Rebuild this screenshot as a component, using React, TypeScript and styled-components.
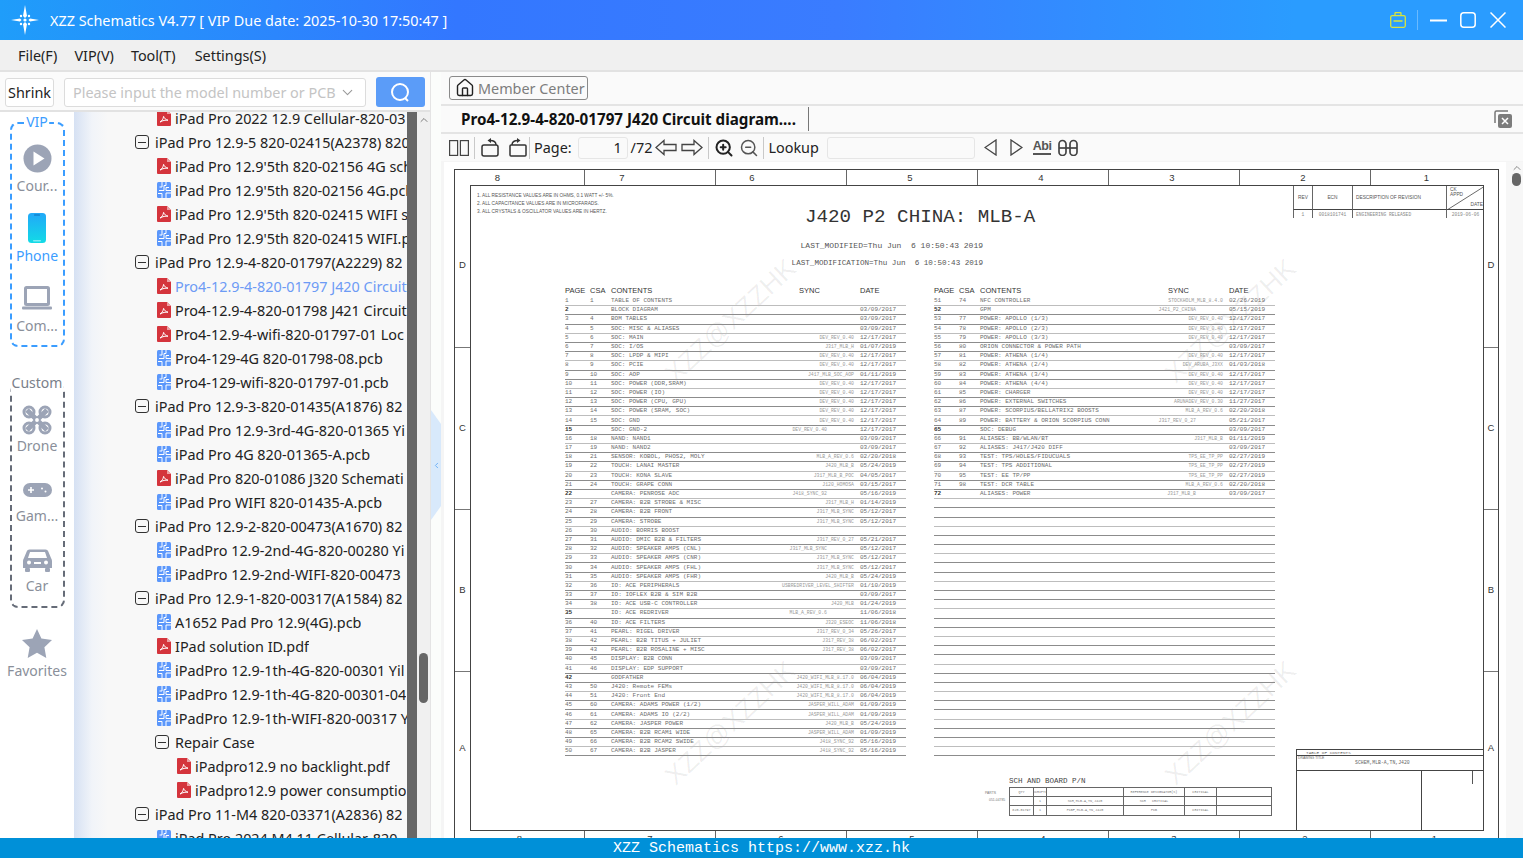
import styled, { createGlobalStyle } from "styled-components";
import { ZoomIn, ZoomOut, House, ChevronDown, ChevronUp, ChevronLeft } from "lucide-react";

const GlobalStyle = createGlobalStyle`
  html, body { margin: 0; padding: 0; height: 100%; overflow: hidden; }
  body { font-family: "Noto Sans", "Open Sans", "Liberation Sans", sans-serif; background: #fff; }
  * { box-sizing: border-box; }
`;

const Page = styled.div`
  width: 1523px;
  height: 858px;
  display: flex;
  flex-direction: column;
  overflow: hidden;
`;

const TitleBar = styled.div`
  height: 40px;
  flex: none;
  display: flex;
  align-items: center;
  padding-left: 11px;
  color: #fff;
  font-size: 14.4px;
  background: linear-gradient(90deg, #1f9dfa 0%, #3377ff 30%, #3a7cff 55%, #2a9cff 85%, #2a9cff 100%);
`;

const TitleText = styled.span`
  margin-left: 11px;
  white-space: pre;
`;

const WindowButtons = styled.div`
  margin-left: auto;
  display: flex;
  align-items: center;
  padding-right: 17px;
`;

const WinDivider = styled.div`
  width: 1px;
  height: 20px;
  background: rgba(255, 255, 255, 0.3);
  margin: 0 12px 0 11px;
`;

const WinIcon = styled.svg`
  display: block;
  margin-left: ${(p) => p.$gap || 0}px;
`;

const MenuBar = styled.div`
  height: 32px;
  flex: none;
  display: flex;
  align-items: center;
  gap: 17px;
  padding: 0 0 0 18px;
  font-size: 14.4px;
  color: #222;
  background: #f0f0f0;
  border-bottom: 2px solid #e2e2e2;
`;

const MenuItem = styled.span`
  margin-left: ${(p) => p.$ml || 0}px;
`;

const Body = styled.div`
  flex: 1;
  min-height: 0;
  display: flex;
`;

const LeftPane = styled.div`
  width: 431px;
  flex: none;
  display: flex;
  flex-direction: column;
  border-right: 1px solid #e4e4e4;
  background: #fbfbfb;
`;

const SearchRow = styled.div`
  height: 40px;
  flex: none;
  display: flex;
  align-items: center;
  padding: 2px 5px 0 5px;
  border-bottom: 2px solid #e2e2e2;
`;

const ShrinkButton = styled.div`
  width: 49px;
  height: 29px;
  border: 1px solid #dcdcdc;
  border-radius: 3px;
  background: #fff;
  display: flex;
  align-items: center;
  justify-content: center;
  font-size: 14.4px;
  color: #222;
`;

const SearchInput = styled.div`
  width: 302px;
  height: 29px;
  margin-left: 10px;
  border: 1px solid #dcdcdc;
  border-radius: 3px;
  background: #fff;
  display: flex;
  align-items: center;
  justify-content: space-between;
  padding: 0 9px 0 8px;
  font-size: 14.4px;
  color: #c4c4c4;
  white-space: nowrap;
`;

const SearchButton = styled.div`
  width: 49px;
  height: 30px;
  margin-left: 10px;
  border-radius: 3px;
  background: #5b9cf8;
  display: flex;
  align-items: center;
  justify-content: center;
`;

const LeftBody = styled.div`
  flex: 1;
  min-height: 0;
  display: flex;
`;

const Sidebar = styled.div`
  width: 74px;
  flex: none;
  background: #fff;
  display: flex;
  flex-direction: column;
  align-items: center;
  padding-top: 10px;
`;

const DashedGroup = styled.div`
  position: relative;
  width: 55px;
  height: ${(p) => p.$h}px;
  margin-top: ${(p) => p.$mt || 0}px;
  border: 2px dashed ${(p) => p.$color};
  border-radius: 8px;
  display: flex;
  flex-direction: column;
  align-items: center;
  padding-top: 19px;
`;

const GroupLabel = styled.span`
  position: absolute;
  top: ${(p) => p.$top}px;
  left: 50%;
  transform: translateX(-50%);
  font-size: 14px;
  line-height: 18px;
  padding: 0 1px;
  background: #fff;
  color: ${(p) => p.$color};
  white-space: nowrap;
`;

const SideItem = styled.div`
  height: 70px;
  width: ${(p) => p.$w || 51}px;
  flex: none;
  margin-top: ${(p) => p.$mt || 0}px;
  display: flex;
  flex-direction: column;
  align-items: center;
  font-size: 14px;
  color: ${(p) => (p.$active ? "#3b9dff" : "#8a8f9a")};
  white-space: nowrap;
`;

const SideIconBox = styled.div`
  height: 30px;
  flex: none;
  display: flex;
  align-items: center;
  justify-content: center;
`;

const SideLabel = styled.span`
  line-height: 20px;
  margin-top: ${(p) => p.$gap ?? 3}px;
`;

const Tree = styled.div`
  flex: 1;
  min-width: 0;
  overflow: hidden;
  background: linear-gradient(90deg, #d6e1f3 0px, #f1f4f9 18px, #f8f8f8 34px);
`;

const TreeInner = styled.div`
  margin-top: -6px;
`;

const TreeRow = styled.div`
  height: 24px;
  display: flex;
  align-items: center;
  padding-left: ${(p) => p.$indent}px;
  font-size: 14.4px;
  color: ${(p) => (p.$active ? "#6d9bf5" : "#222")};
  white-space: nowrap;
  overflow: hidden;
`;

const RowLabel = styled.span`
  margin-left: ${(p) => p.$gap}px;
  min-width: 0;
  overflow: hidden;
`;

const FileSvg = styled.svg`
  flex: none;
`;

const MinusBox = styled.span`
  width: 14px;
  height: 14px;
  flex: none;
  border: 1px solid #333;
  border-radius: 3px;
  display: flex;
  align-items: center;
  justify-content: center;
  &::before {
    content: "";
    width: 8px;
    height: 1px;
    background: #333;
  }
`;

const DarkTrack = styled.div`
  width: 10px;
  flex: none;
  background: #676767;
`;

const LightTrack = styled.div`
  width: 13px;
  flex: none;
  background: #f0f0f0;
  display: flex;
  flex-direction: column;
  align-items: center;
  padding-top: 2px;
`;

const LightThumb = styled.div`
  width: 9px;
  height: 50px;
  margin-top: 527px;
  border-radius: 5px;
  background: #666;
`;

const Splitter = styled.div`
  position: relative;
  width: 10px;
  flex: none;
  background: #fbfdfb;
`;

const SplitHandle = styled.div`
  position: absolute;
  top: 338px;
  left: 0;
  width: 10px;
  height: 110px;
  display: flex;
  align-items: center;
  justify-content: center;
  color: #6aaef5;
`;

const HandleShape = styled.svg`
  position: absolute;
  inset: 0;
`;

const HandleChevron = styled(ChevronLeft)`
  position: relative;
`;

const RightPane = styled.div`
  flex: 1;
  min-width: 0;
  display: flex;
  flex-direction: column;
  background: #fafafa;
`;

const MemberRow = styled.div`
  height: 34px;
  flex: none;
  display: flex;
  align-items: center;
  padding-left: 8px;
  border-bottom: 2px solid #e4e4e4;
`;

const MemberButton = styled.div`
  width: 139px;
  height: 24px;
  border: 1px solid #8a8a8a;
  border-radius: 3px;
  display: flex;
  align-items: center;
  gap: 3px;
  padding-left: 5px;
  font-size: 14.4px;
  color: #7d7d7d;
  white-space: nowrap;
`;

const TabRow = styled.div`
  height: 28px;
  flex: none;
  display: flex;
  align-items: center;
  padding-left: 20px;
  border-bottom: 2px solid #e4e4e4;
`;

const TabTitle = styled.span`
  font-size: 15.2px;
  font-weight: 700;
  color: #111;
  width: 347px;
  white-space: nowrap;
`;

const TabDivider = styled.div`
  width: 1px;
  height: 24px;
  background: #777;
`;

const CloseAll = styled.svg`
  margin-left: auto;
  margin-right: 11px;
`;

const ToolBar = styled.div`
  height: 27px;
  flex: none;
  display: flex;
  align-items: center;
  padding-left: 8px;
  font-size: 14.4px;
  color: #222;
`;

const ToolIcon = styled.svg`
  display: block;
  flex: none;
  margin-left: ${(p) => p.$ml || 0}px;
`;

const ToolSep = styled.div`
  width: 1px;
  height: 22px;
  flex: none;
  background: #c9c9c9;
  margin: 0 ${(p) => p.$r}px 0 ${(p) => p.$l}px;
`;

const ToolText = styled.span`
  margin-left: ${(p) => p.$ml || 0}px;
  white-space: nowrap;
`;

const PageBox = styled.div`
  width: 50px;
  height: 22px;
  margin-left: 6px;
  border: 1px solid #e6e6e6;
  border-radius: 3px;
  text-align: right;
  padding-right: 5px;
  line-height: 20px;
  background: #fafafa;
`;

const LookupBox = styled.div`
  width: 148px;
  height: 22px;
  margin-left: 8px;
  border: 1px solid #e6e6e6;
  border-radius: 3px;
  background: #fafafa;
`;

const AbiMark = styled.span`
  margin-left: 10px;
  font-size: 12.5px;
  font-weight: 700;
  line-height: 13px;
  color: #555;
  border-bottom: 2px solid #555;
  letter-spacing: -0.5px;
  font-family: "Liberation Sans", sans-serif;
`;

const ZoomWrap = styled.span`
  display: flex;
  flex: none;
  margin-left: ${(p) => p.$ml}px;
  color: ${(p) => p.$color};
`;

const Viewer = styled.div`
  flex: 1;
  min-height: 0;
  display: flex;
  padding: 1px 0 0 3px;
  background: #f5f5f5;
`;

const Sheet = styled.div`
  width: 1062px;
  flex: none;
  background: #fff;
  padding: 7px 7px 0 10px;
  overflow: hidden;
`;

const Frame = styled.div`
  height: 678px;
  border: 1px solid #444;
  display: flex;
  flex-direction: column;
  font-family: "Liberation Sans", sans-serif;
`;

const ZoneRow = styled.div`
  height: 15px;
  flex: none;
  display: grid;
  grid-template-columns: 129px repeat(6, 131px) 1fr;
`;

const ZoneCell = styled.div`
  text-align: center;
  font-size: 9.5px;
  line-height: 16px;
  color: #333;
  padding-right: ${(p) => p.$pull || 0}px;
  border-left: ${(p) => (p.$first ? 0 : "1px solid #666")};
`;

const FrameMiddle = styled.div`
  flex: 1;
  min-height: 0;
  display: flex;
`;

const Margin = styled.div`
  width: ${(p) => p.$w}px;
  flex: none;
  display: flex;
  flex-direction: column;
`;

const MarginCell = styled.div`
  height: ${(p) => p.$h}px;
  flex: none;
  display: flex;
  align-items: center;
  justify-content: center;
  padding-bottom: ${(p) => (p.$last ? 12 : 3)}px;
  font-size: 9.5px;
  color: #333;
  border-bottom: ${(p) => (p.$last ? 0 : "1px solid #777")};
`;

const Drawing = styled.div`
  position: relative;
  flex: 1;
  min-width: 0;
  border: 1px solid #444;
  overflow: hidden;
`;

const Note = styled.div`
  position: absolute;
  left: 6px;
  top: 6px;
  font-size: 4.75px;
  line-height: 8px;
  color: #555;
  white-space: pre;
`;

const MainHeading = styled.div`
  position: absolute;
  left: 334px;
  top: 20px;
  font-family: "Liberation Mono", monospace;
  font-size: 19.2px;
  line-height: 22px;
  color: #333;
  white-space: pre;
`;

const ModLine = styled.div`
  position: absolute;
  right: 500px;
  top: ${(p) => p.$top}px;
  font-family: "Liberation Mono", monospace;
  font-size: ${(p) => p.$size}px;
  line-height: 9px;
  color: #555;
  white-space: pre;
`;

const Watermark = styled.div`
  position: absolute;
  left: ${(p) => p.$x}px;
  top: ${(p) => p.$y}px;
  font-size: 27px;
  line-height: 30px;
  color: rgba(0, 0, 0, 0.065);
  transform: rotate(-43deg);
  white-space: nowrap;
  pointer-events: none;
`;

const TocTable = styled.div`
  position: absolute;
  left: ${(p) => p.$x}px;
  top: 100px;
  width: 341px;
`;

const TocHeader = styled.div`
  height: 11px;
  display: grid;
  grid-template-columns: 25px 21px 188px 61px 46px;
  font-size: 7.5px;
  line-height: 9px;
  color: #333;
`;

const TocLine = styled.div`
  height: 9.2px;
  display: grid;
  grid-template-columns: 25px 21px 130px 1fr 46px;
  align-items: center;
  border-bottom: 1px solid ${(p) => (p.$soft ? "#bdbdbd" : "#8c8c8c")};
  font-family: "Liberation Mono", monospace;
  font-size: 6px;
  line-height: 8px;
  color: #6e6e6e;
  white-space: pre;
`;

const TocPageNo = styled.span`
  color: ${(p) => (p.$strong ? "#333" : "#6e6e6e")};
  font-weight: ${(p) => (p.$strong ? 700 : 400)};
`;

const TocSync = styled.span`
  text-align: right;
  font-size: 4.8px;
  color: #9a9a9a;
  padding-right: ${(p) => (p.$shift ? 33 : 6)}px;
  overflow: hidden;
`;

const RevBlock = styled.div`
  position: absolute;
  left: 822px;
  top: 0;
  width: 191px;
  display: grid;
  grid-template-columns: 19px 40px 94px 1fr;
  grid-template-rows: 24px 8px;
  font-size: 4.8px;
  color: #555;
`;

const RevCell = styled.div`
  position: relative;
  border-left: 1px solid #666;
  border-bottom: ${(p) => (p.$head ? "1px solid #444" : 0)};
  display: flex;
  align-items: center;
  justify-content: ${(p) => (p.$left ? "flex-start" : "center")};
  padding-left: ${(p) => (p.$left ? 3 : 0)}px;
  white-space: nowrap;
  overflow: hidden;
`;

const RevMono = styled.span`
  font-family: "Liberation Mono", monospace;
  font-size: 4.6px;
  color: #888;
`;

const RevDiagonal = styled.svg`
  position: absolute;
  inset: 0;
`;

const CkText = styled.span`
  position: absolute;
  left: 3px;
  top: 2px;
  line-height: 4.5px;
`;

const DateText = styled.span`
  position: absolute;
  right: 1px;
  bottom: 2px;
`;

const TitleBlock = styled.div`
  position: absolute;
  left: 825px;
  top: 563px;
  width: 189px;
  height: 82px;
  border-left: 1px solid #444;
  border-top: 1px solid #444;
  display: flex;
  flex-direction: column;
  font-family: "Liberation Mono", monospace;
  color: #666;
`;

const TitleBlockRow = styled.div`
  position: relative;
  height: ${(p) => p.$h}px;
  flex: none;
  border-bottom: 1px solid #444;
  font-size: ${(p) => p.$size}px;
  line-height: ${(p) => p.$h - 1}px;
  padding-left: ${(p) => p.$pad}px;
  white-space: pre;
`;

const TinyLabel = styled.span`
  position: absolute;
  left: 1px;
  top: 0;
  font-size: 3.4px;
  line-height: 5px;
  font-family: "Liberation Sans", sans-serif;
`;

const TitleBlockBottom = styled.div`
  flex: 1;
  display: flex;
`;

const TitleBlockCell = styled.div`
  flex: none;
  width: 125px;
  border-right: 1px solid #444;
`;

const TitleBlockTick = styled.div`
  width: 1px;
  height: 13px;
  margin-left: 50px;
  background: #555;
`;

const BomHeading = styled.div`
  position: absolute;
  left: 538px;
  top: 591px;
  font-family: "Liberation Mono", monospace;
  font-size: 7.5px;
  line-height: 9px;
  color: #444;
  white-space: pre;
`;

const BomSide = styled.div`
  position: absolute;
  left: ${(p) => p.$x}px;
  top: ${(p) => p.$y}px;
  font-size: 3.4px;
  line-height: 5px;
  color: #777;
  white-space: pre;
`;

const BomTable = styled.div`
  position: absolute;
  left: 538px;
  top: 601px;
  width: 263px;
  border-top: 1px solid #666;
  border-left: 1px solid #666;
  display: grid;
  grid-template-columns: 24px 13px 77px 61px 32px 1fr;
  grid-auto-rows: 9.2px;
  font-family: "Liberation Mono", monospace;
  font-size: 3.4px;
  color: #777;
`;

const BomCell = styled.div`
  border-right: 1px solid #666;
  border-bottom: 1px solid #666;
  display: flex;
  align-items: center;
  justify-content: center;
  white-space: pre;
  overflow: hidden;
`;

const PageScroll = styled.div`
  flex: 1;
  display: flex;
  flex-direction: column;
  align-items: center;
  padding-left: 4px;
  background: #f7f7f7;
  color: #666;
`;

const PageThumb = styled.div`
  width: 9px;
  height: 13px;
  border-radius: 5px;
  background: #666;
  margin-top: -1px;
`;

const PageScrollEnd = styled.div`
  margin-top: auto;
  height: 9px;
  overflow: hidden;
`;

const StatusBar = styled.div`
  height: 20px;
  flex: none;
  padding-top: 1px;
  background: #0090d8;
  color: #fff;
  font-family: "Liberation Mono", monospace;
  font-size: 15px;
  line-height: 20px;
  text-align: center;
  white-space: pre;
  overflow: hidden;
`;

const PdfIcon = () => (
  <FileSvg width="14" height="16" viewBox="0 0 14 16">
    <path d="M1 0h9l4 4v11a1 1 0 0 1-1 1H1a1 1 0 0 1-1-1V1a1 1 0 0 1 1-1z" fill="#d4343c" />
    <path d="M10 0l4 4h-4z" fill="#eda0a4" />
    <path d="M3 12c2-1 3.2-3 3.6-5.6.8 2 2 3.2 4.4 3.8-2.6-.2-5.2.2-8 1.8z" fill="none" stroke="#fff" strokeWidth="1" />
  </FileSvg>
);

const PcbIcon = () => (
  <FileSvg width="14" height="16" viewBox="0 0 14 16">
    <rect width="14" height="16" rx="1.5" fill="#5b97fb" />
    <path d="M5 0v5H2.5M9 0v3.5H7v5H2M12 5.5H9v3h5M5 16v-4.5H1M9 16v-5h5" fill="none" stroke="#fff" strokeWidth="1" />
  </FileSvg>
);

const Logo = () => (
  <svg width="28" height="30" viewBox="0 0 28 30">
    <path d="M14 0l2 11-2 2-2-2zM14 30l-2-11 2-2 2 2zM0 15l9-1.6 1.6 1.6L9 16.6zM28 15l-9 1.6-1.6-1.6 1.6-1.6z" fill="#fff" />
    <circle cx="10" cy="11" r="1.2" fill="#fff" />
    <circle cx="18" cy="11" r="1.2" fill="#fff" />
    <circle cx="10" cy="19" r="1.2" fill="#fff" />
    <circle cx="18" cy="19" r="1.2" fill="#fff" />
    <circle cx="14" cy="15" r="1.6" fill="#fff" />
  </svg>
);

const GREY = "#9ca4b6";

const PlayIcon = () => (
  <svg width="29" height="29" viewBox="0 0 29 29">
    <circle cx="14.5" cy="14.5" r="14" fill={GREY} />
    <path d="M10.5 7.5l11 7-11 7z" fill="#fff" />
  </svg>
);

const PhoneIcon = () => (
  <svg width="18" height="30" viewBox="0 0 18 30">
    <defs>
      <linearGradient id="ph" x1="0" y1="0" x2="0" y2="1">
        <stop offset="0" stopColor="#21a8f8" />
        <stop offset="1" stopColor="#12dbe6" />
      </linearGradient>
    </defs>
    <rect width="18" height="30" rx="3.5" fill="url(#ph)" />
    <rect x="6" y="1.6" width="6" height="1" rx=".5" fill="#0b6fb8" />
    <rect x="5" y="27.4" width="8" height=".8" rx=".4" fill="#e8ffff" />
  </svg>
);

const LaptopIcon = () => (
  <svg width="30" height="24" viewBox="0 0 30 24">
    <rect x="3.5" y="1.5" width="23" height="17" rx="1" fill="none" stroke={GREY} strokeWidth="3" />
    <rect x="0" y="20.5" width="30" height="3" rx="1" fill={GREY} />
  </svg>
);

const DroneIcon = () => (
  <svg width="30" height="30" viewBox="0 0 30 30">
    <g fill="none" stroke={GREY}>
      <circle cx="7" cy="7" r="5" strokeWidth="3" />
      <circle cx="23" cy="7" r="5" strokeWidth="3" />
      <circle cx="7" cy="23" r="5" strokeWidth="3" />
      <circle cx="23" cy="23" r="5" strokeWidth="3" />
      <path d="M5 5l20 20M25 5L5 25" strokeWidth="5" />
    </g>
    <circle cx="15" cy="15" r="2.6" fill="#fff" stroke={GREY} strokeWidth="1.4" />
  </svg>
);

const GameIcon = () => (
  <svg width="29" height="14" viewBox="0 0 29 14">
    <rect width="29" height="14" rx="7" fill={GREY} />
    <path d="M8 4v6M5 7h6" stroke="#fff" strokeWidth="1.6" />
    <circle cx="19" cy="5.5" r="1" fill="#fff" />
    <circle cx="22.5" cy="8.5" r="1" fill="#fff" />
  </svg>
);

const CarIcon = () => (
  <svg width="29" height="24" viewBox="0 0 29 24">
    <path d="M6.5 1.5h16c1.4 0 2.3.8 2.8 2L28 10c.6 1 1 1.8 1 3v7H0v-7c0-1.200.4-2 1-3l2.700-6.500c.5-1.200 1.400-2 2.800-2z" fill={GREY} />
    <path d="M7 4h15l2 6H5z" fill="#fff" />
    <circle cx="6" cy="14.500" r="2" fill="#fff" />
    <circle cx="23" cy="14.500" r="2" fill="#fff" />
    <rect x="11" y="14" width="7" height="2" fill="#fff" />
    <rect x="2" y="20" width="5" height="4" rx="1" fill={GREY} />
    <rect x="22" y="20" width="5" height="4" rx="1" fill={GREY} />
  </svg>
);

const StarIcon = () => (
  <svg width="30" height="29" viewBox="0 0 30 29">
    <path d="M15 0l4.400 9.500L30 11l-7.600 7.200L24.300 29 15 23.800 5.700 29l1.900-10.800L0 11l10.600-1.500z" fill={GREY} />
  </svg>
);

type FileKind = "group" | "pdf" | "pcb" | "sub";
type TreeEntry = { kind: FileKind; text: string; indent?: number; active?: boolean };

// names are only as long as the panel shows them, the panel cuts the rest
const treeEntries: TreeEntry[] = [
  { kind: "pdf", text: "iPad Pro 2022 12.9 Cellular-820-03" },
  { kind: "group", text: "iPad Pro 12.9-5 820-02415(A2378) 820" },
  { kind: "pdf", text: "iPad Pro 12.9'5th 820-02156 4G sch" },
  { kind: "pcb", text: "iPad Pro 12.9'5th 820-02156 4G.pcb" },
  { kind: "pdf", text: "iPad Pro 12.9'5th 820-02415 WIFI s" },
  { kind: "pcb", text: "iPad Pro 12.9'5th 820-02415 WIFI.pcb" },
  { kind: "group", text: "iPad Pro 12.9-4-820-01797(A2229) 82" },
  { kind: "pdf", text: "Pro4-12.9-4-820-01797 J420 Circuit", active: true },
  { kind: "pdf", text: "Pro4-12.9-4-820-01798 J421 Circuit" },
  { kind: "pdf", text: "Pro4-12.9-4-wifi-820-01797-01 Loc" },
  { kind: "pcb", text: "Pro4-129-4G 820-01798-08.pcb" },
  { kind: "pcb", text: "Pro4-129-wifi-820-01797-01.pcb" },
  { kind: "group", text: "iPad Pro 12.9-3-820-01435(A1876) 82" },
  { kind: "pcb", text: "iPad Pro 12.9-3rd-4G-820-01365 Yi" },
  { kind: "pcb", text: "iPad Pro 4G 820-01365-A.pcb" },
  { kind: "pdf", text: "iPad Pro 820-01086 J320 Schemati" },
  { kind: "pcb", text: "iPad Pro WIFI 820-01435-A.pcb" },
  { kind: "group", text: "iPad Pro 12.9-2-820-00473(A1670) 82" },
  { kind: "pcb", text: "iPadPro 12.9-2nd-4G-820-00280 Yi" },
  { kind: "pcb", text: "iPadPro 12.9-2nd-WIFI-820-00473" },
  { kind: "group", text: "iPad Pro 12.9-1-820-00317(A1584) 82" },
  { kind: "pcb", text: "A1652 Pad Pro 12.9(4G).pcb" },
  { kind: "pdf", text: "IPad solution ID.pdf" },
  { kind: "pcb", text: "iPadPro 12.9-1th-4G-820-00301 Yil" },
  { kind: "pcb", text: "iPadPro 12.9-1th-4G-820-00301-04" },
  { kind: "pcb", text: "iPadPro 12.9-1th-WIFI-820-00317 Y" },
  { kind: "sub", text: "Repair Case" },
  { kind: "pdf", text: "iPadpro12.9 no backlight.pdf", indent: 103 },
  { kind: "pdf", text: "iPadpro12.9 power consumptio", indent: 103 },
  { kind: "group", text: "iPad Pro 11-M4 820-03371(A2836) 82" },
  { kind: "pcb", text: "iPad Pro 2024 M4 11 Cellular-820-" },
];

const rowIndent = (e: TreeEntry) => {
  if (e.indent) return e.indent;
  if (e.kind === "group") return 61;
  if (e.kind === "sub") return 81;
  return 83;
};

// page|csa|contents|sync|date, a trailing ^ on sync means it sits further left
const leftToc = `1|1|TABLE OF CONTENTS||
2||BLOCK DIAGRAM||03/09/2017
3|4|BOM TABLES||03/09/2017
4|5|SOC: MISC & ALIASES||03/09/2017
5|6|SOC: MAIN|DEV_REV_0.40|12/17/2017
6|7|SOC: I/OS|J317_MLB_H|01/07/2019
7|8|SOC: LPDP & MIPI|DEV_REV_0.40|12/17/2017
8|9|SOC: PCIE|DEV_REV_0.40|12/17/2017
9|10|SOC: AOP|J417_MLB_SOC_AOP|01/11/2019
10|11|SOC: POWER (DDR,SRAM)|DEV_REV_0.40|12/17/2017
11|12|SOC: POWER (IO)|DEV_REV_0.40|12/17/2017
12|13|SOC: POWER (CPU, GPU)|DEV_REV_0.40|12/17/2017
13|14|SOC: POWER (SRAM, SOC)|DEV_REV_0.40|12/17/2017
14|15|SOC: GND|DEV_REV_0.40|12/17/2017
15||SOC: GND-2|DEV_REV_0.40^|12/17/2017
16|18|NAND: NAND1||03/09/2017
17|19|NAND: NAND2||03/09/2017
18|21|SENSOR: KOBOL, PHOS2, MOLY|MLB_A_REV_0.6|02/20/2018
19|22|TOUCH: LANAI MASTER|J420_MLB_B|05/24/2019
20|23|TOUCH: KONA SLAVE|J317_MLB_B_POC|04/05/2017
21|24|TOUCH: GRAPE CONN|J120_HOMOSA|03/15/2017
22||CAMERA: PENROSE ADC|J418_SYNC_92^|05/16/2019
23|27|CAMERA: B2B STROBE & MISC|J317_MLB_H|01/14/2019
24|28|CAMERA: B2B FRONT|J317_MLB_SYNC|05/12/2017
25|29|CAMERA: STROBE|J317_MLB_SYNC|05/12/2017
26|30|AUDIO: BORRIS BOOST||
27|31|AUDIO: DMIC B2B & FILTERS|J317_REV_0_27|05/21/2017
28|32|AUDIO: SPEAKER AMPS (CNL)|J317_MLB_SYNC^|05/12/2017
29|33|AUDIO: SPEAKER AMPS (CNR)|J317_MLB_SYNC|05/12/2017
30|34|AUDIO: SPEAKER AMPS (FHL)|J317_MLB_SYNC|05/12/2017
31|35|AUDIO: SPEAKER AMPS (FHR)|J420_MLB_B|05/24/2019
32|36|IO: ACE PERIPHERALS|USBREDRIVER_LEVEL_SHIFTER|01/10/2019
33|37|IO: IOFLEX B2B & SIM B2B||03/09/2017
34|38|IO: ACE USB-C CONTROLLER|J420_MLB|01/24/2019
35||IO: ACE REDRIVER|MLB_A_REV_0.6^|11/06/2018
36|40|IO: ACE FILTERS|J320_ESEOC|11/06/2018
37|41|PEARL: RIGEL DRIVER|J317_REV_0_34|05/26/2017
38|42|PEARL: B2B TITUS + JULIET|J317_REV_38|06/02/2017
39|43|PEARL: B2B ROSALINE + MISC|J317_REV_38|06/02/2017
40|45|DISPLAY: B2B CONN||03/09/2017
41|46|DISPLAY: EDP SUPPORT||03/09/2017
42||GODFATHER|J420_WIFI_MLB_8.17.0|06/04/2019
43|50|J420: Remote FEMs|J420_WIFI_MLB_8.17.0|06/04/2019
44|51|J420: Front End|J420_WIFI_MLB_8.17.0|06/04/2019
45|60|CAMERA: ADAMS POWER (1/2)|JASPER_WILL_ADAM|01/09/2019
46|61|CAMERA: ADAMS IO (2/2)|JASPER_WILL_ADAM|01/09/2019
47|62|CAMERA: JASPER POWER|J420_MLB_B|05/24/2019
48|65|CAMERA: B2B RCAM1 WIDE|JASPER_WILL_ADAM|01/09/2019
49|66|CAMERA: B2B RCAM2 SWIDE|J418_SYNC_92|05/16/2019
50|67|CAMERA: B2B JASPER|J418_SYNC_92|05/16/2019`;

const rightToc = `51|74|NFC CONTROLLER|STOCKHOLM_MLB_8.4.0|02/26/2019
52||GPM|J421_P2_CHINA^|05/15/2019
53|77|POWER: APOLLO (1/3)|DEV_REV_0.40|12/17/2017
54|78|POWER: APOLLO (2/3)|DEV_REV_0.40|12/17/2017
55|79|POWER: APOLLO (3/3)|DEV_REV_0.40|12/17/2017
56|80|ORION CONNECTOR & POWER PATH||03/09/2017
57|81|POWER: ATHENA (1/4)|DEV_REV_0.40|12/17/2017
58|82|POWER: ATHENA (2/4)|DEV_ARUBA_J3XX|01/03/2018
59|83|POWER: ATHENA (3/4)|DEV_REV_0.40|12/17/2017
60|84|POWER: ATHENA (4/4)|DEV_REV_0.40|12/17/2017
61|85|POWER: CHARGER|DEV_REV_0.40|12/17/2017
62|86|POWER: EXTERNAL SWITCHES|ARUNADEV_REV_0.30|11/27/2017
63|87|POWER: SCORPIUS/BELLATRIX2 BOOSTS|MLB_A_REV_0.6|02/20/2018
64|89|POWER: BATTERY & ORION SCORPIUS CONN|J317_REV_0_27^|05/21/2017
65||SOC: DEBUG||03/09/2017
66|91|ALIASES: BB/WLAN/BT|J317_MLB_B|01/11/2019
67|92|ALIASES: J417/J420 DIFF||03/09/2017
68|93|TEST: TPS/HOLES/FIDUCUALS|TPS_EE_TP_PP|02/27/2019
69|94|TEST: TPS ADDITIONAL|TPS_EE_TP_PP|02/27/2019
70|95|TEST: EE TP/PP|TPS_EE_TP_PP|02/27/2019
71|98|TEST: DCR TABLE|MLB_A_REV_0.6|02/20/2018
72||ALIASES: POWER|J317_MLB_B^|03/09/2017`;

const strongPages = new Set(["2", "15", "22", "35", "42", "52", "65", "72"]);

const parseToc = (raw: string, fill: number) => {
  const rows = raw.split("\n").map((l) => l.split("|"));
  while (rows.length < fill) rows.push(["", "", "", "", ""]);
  return rows;
};

const TocBlock = ({ x, raw }: { x: number; raw: string }) => (
  <TocTable $x={x}>
    <TocHeader>
      <span>PAGE</span>
      <span>CSA</span>
      <span>CONTENTS</span>
      <span>SYNC</span>
      <span>DATE</span>
    </TocHeader>
    {parseToc(raw, 50).map((r, i) => {
      const shift = r[3].endsWith("^");
      return (
        <TocLine key={i} $soft={i % 3 === 0}>
          <TocPageNo $strong={strongPages.has(r[0])}>{r[0]}</TocPageNo>
          <span>{r[1]}</span>
          <span>{r[2]}</span>
          <TocSync $shift={shift}>{r[3].replace("^", "")}</TocSync>
          <span>{r[4]}</span>
        </TocLine>
      );
    })}
  </TocTable>
);

const zoneLabels = ["8", "7", "6", "5", "4", "3", "2", "1"];
const zoneLetters = ["D", "C", "B", "A"];
// the printed numbers do not sit in the middle of their cells on the top strip
const topPull = [44, 56, 58, 4, 4, 4, 4, 16];

const ZoneStrip = ({ pull }: { pull?: number[] }) => (
  <ZoneRow>
    {zoneLabels.map((z, i) => (
      <ZoneCell key={z} $first={i === 0} $pull={pull ? pull[i] : 0}>
        {z}
      </ZoneCell>
    ))}
  </ZoneRow>
);

const MarginStrip = ({ w }: { w: number }) => (
  <Margin $w={w}>
    {zoneLetters.map((l, i) => (
      <MarginCell key={l} $h={i === 0 ? 163 : 162} $last={i === 3}>
        {l}
      </MarginCell>
    ))}
  </Margin>
);

const bomCells = [
  "QTY", "DESCRIPTION", "", "REFERENCE DESIGNATOR(S)", "CRITICAL", "",
  "", "1", "SCH,MLB-A,TN,J420", "SCH   CRITICAL", "", "",
  "820-01797", "1", "PCBF,MLB-A,TN,J420", "PCB", "CRITICAL", "",
];

export default function App() {
  return (
    <Page>
      <GlobalStyle />
      <TitleBar>
        <Logo />
        <TitleText>XZZ Schematics V4.77 [ VIP Due date: 2025-10-30 17:50:47 ]</TitleText>
        <WindowButtons>
          <WinIcon width="16" height="16" viewBox="0 0 16 16" fill="none" stroke="#d9e43c" strokeWidth="1.300">
            <rect x="0.700" y="3.700" width="14.600" height="11.600" rx="1.500" />
            <path d="M5 3.500V1.500a1 1 0 0 1 1-1h4a1 1 0 0 1 1 1v2M3.500 9h9" />
          </WinIcon>
          <WinDivider />
          <WinIcon width="17" height="3" viewBox="0 0 17 3">
            <rect width="17" height="2" y="0.500" fill="#fff" />
          </WinIcon>
          <WinIcon $gap={13} width="16" height="16" viewBox="0 0 16 16" fill="none" stroke="#fff" strokeWidth="1.500">
            <rect x="0.800" y="0.800" width="14.400" height="14.400" rx="3" />
          </WinIcon>
          <WinIcon $gap={14} width="16" height="16" viewBox="0 0 16 16" fill="none" stroke="#fff" strokeWidth="1.500">
            <path d="M0.500 0.500l15 15M15.500 0.500l-15 15" />
          </WinIcon>
        </WindowButtons>
      </TitleBar>
      <MenuBar>
        <MenuItem>File(F)</MenuItem>
        <MenuItem>VIP(V)</MenuItem>
        <MenuItem>Tool(T)</MenuItem>
        <MenuItem $ml={2}>Settings(S)</MenuItem>
      </MenuBar>
      <Body>
        <LeftPane>
          <SearchRow>
            <ShrinkButton>Shrink</ShrinkButton>
            <SearchInput>
              Please input the model number or PCB
              <ChevronDown size={17} color="#9a9a9a" strokeWidth={1.5} />
            </SearchInput>
            <SearchButton>
              <svg width="19" height="19" viewBox="0 0 19 19" fill="none" stroke="#fff" strokeWidth="2">
                <circle cx="9" cy="9" r="8" />
                <path d="M14 15l3 3" />
              </svg>
            </SearchButton>
          </SearchRow>
          <LeftBody>
            <Sidebar>
              <DashedGroup $h={225} $color="#3b9dff">
                <GroupLabel $top={-11} $color="#3b9dff">VIP</GroupLabel>
                <SideItem>
                  <SideIconBox><PlayIcon /></SideIconBox>
                  <SideLabel>Cour...</SideLabel>
                </SideItem>
                <SideItem $active>
                  <SideIconBox><PhoneIcon /></SideIconBox>
                  <SideLabel>Phone</SideLabel>
                </SideItem>
                <SideItem>
                  <SideIconBox><LaptopIcon /></SideIconBox>
                  <SideLabel>Com...</SideLabel>
                </SideItem>
              </DashedGroup>
              <DashedGroup $h={224} $mt={37} $color="#666c78">
                <GroupLabel $top={-12} $color="#7a808a">Custom</GroupLabel>
                <SideItem>
                  <SideIconBox><DroneIcon /></SideIconBox>
                  <SideLabel $gap={1}>Drone</SideLabel>
                </SideItem>
                <SideItem>
                  <SideIconBox><GameIcon /></SideIconBox>
                  <SideLabel $gap={1}>Gam...</SideLabel>
                </SideItem>
                <SideItem>
                  <SideIconBox><CarIcon /></SideIconBox>
                  <SideLabel $gap={1}>Car</SideLabel>
                </SideItem>
              </DashedGroup>
              <SideItem $w={70} $mt={20}>
                <SideIconBox><StarIcon /></SideIconBox>
                <SideLabel>Favorites</SideLabel>
              </SideItem>
            </Sidebar>
            <Tree>
              <TreeInner>
                {treeEntries.map((e) => (
                  <TreeRow key={e.text} $indent={rowIndent(e)} $active={e.active}>
                    {e.kind === "pdf" && <PdfIcon />}
                    {e.kind === "pcb" && <PcbIcon />}
                    {(e.kind === "group" || e.kind === "sub") && <MinusBox />}
                    <RowLabel $gap={e.kind === "group" || e.kind === "sub" ? 6 : 4}>{e.text}</RowLabel>
                  </TreeRow>
                ))}
              </TreeInner>
            </Tree>
            <DarkTrack />
            <LightTrack>
              <ChevronUp size={12} color="#555" strokeWidth={1.5} />
              <LightThumb />
            </LightTrack>
          </LeftBody>
        </LeftPane>
        <Splitter>
          <SplitHandle>
            <HandleShape width="10" height="110" viewBox="0 0 10 110">
              <path d="M0 0l10 14v82L0 110z" fill="#d8e9fb" />
            </HandleShape>
            <HandleChevron size={9} strokeWidth={2.500} />
          </SplitHandle>
        </Splitter>
        <RightPane>
          <MemberRow>
            <MemberButton>
              <House size={20} color="#222" strokeWidth={1.700} />
              Member Center
            </MemberButton>
          </MemberRow>
          <TabRow>
            <TabTitle>Pro4-12.9-4-820-01797 J420 Circuit diagram....</TabTitle>
            <TabDivider />
            <CloseAll width="18" height="18" viewBox="0 0 18 18">
              <path d="M1 13V2.500A1.500 1.500 0 0 1 2.500 1H14" fill="none" stroke="#777" strokeWidth="1.500" />
              <rect x="4" y="4" width="14" height="14" rx="2" fill="#7c7c7c" />
              <path d="M8 8l6 6M14 8l-6 6" stroke="#fff" strokeWidth="1.500" />
            </CloseAll>
          </TabRow>
          <ToolBar>
            <ToolIcon width="20" height="16" viewBox="0 0 20 16" fill="none" stroke="#444" strokeWidth="1.200">
              <rect x="0.600" y="0.600" width="8" height="14.800" />
              <rect x="11.400" y="0.600" width="8" height="14.800" />
            </ToolIcon>
            <ToolSep $l={5} $r={6} />
            <ToolIcon width="19" height="19" viewBox="0 0 19 19" fill="none" stroke="#333" strokeWidth="1.500">
              <rect x="1" y="7" width="16" height="11" rx="2" />
              <path d="M15 7c0-3-2.500-4.500-6-4.500" />
              <path d="M10 0L6.500 2.500 10 5z" fill="#333" stroke="none" />
            </ToolIcon>
            <ToolIcon $ml={8} width="19" height="19" viewBox="0 0 19 19" fill="none" stroke="#333" strokeWidth="1.500">
              <rect x="2" y="7" width="16" height="11" rx="1" />
              <path d="M4 7c0-3 2.500-4.500 6-4.500" />
              <path d="M9 0l3.500 2.500L9 5z" fill="#333" stroke="none" />
            </ToolIcon>
            <ToolSep $l={2} $r={4} />
            <ToolText>Page:</ToolText>
            <PageBox>1</PageBox>
            <ToolText $ml={3}>/72</ToolText>
            <ToolIcon $ml={3} width="22" height="17" viewBox="0 0 22 17" fill="none" stroke="#444" strokeWidth="1.300">
              <path d="M1 8.500L9 1.500v4h12v6H9v4z" />
            </ToolIcon>
            <ToolIcon $ml={4} width="22" height="17" viewBox="0 0 22 17" fill="none" stroke="#444" strokeWidth="1.300">
              <path d="M21 8.500L13 1.500v4H1v6h12v4z" />
            </ToolIcon>
            <ToolSep $l={5} $r={0} />
            <ZoomWrap $ml={5} $color="#222"><ZoomIn size={20} strokeWidth={2.400} /></ZoomWrap>
            <ZoomWrap $ml={5} $color="#555"><ZoomOut size={20} strokeWidth={1.800} /></ZoomWrap>
            <ToolSep $l={4} $r={4} />
            <ToolText>Lookup</ToolText>
            <LookupBox />
            <ToolIcon $ml={9} width="13" height="17" viewBox="0 0 13 17" fill="none" stroke="#444" strokeWidth="1.300">
              <path d="M12 1L1 8.500 12 16z" />
            </ToolIcon>
            <ToolIcon $ml={13} width="13" height="17" viewBox="0 0 13 17" fill="none" stroke="#444" strokeWidth="1.300">
              <path d="M1 1l11 7.500L1 16z" />
            </ToolIcon>
            <AbiMark>Abi</AbiMark>
            <ToolIcon $ml={7} width="20" height="17" viewBox="0 0 20 17" fill="none" stroke="#444" strokeWidth="1.700">
              <path d="M1 11V5a3.500 3.500 0 0 1 7 0v8a3 3 0 0 1-7 0zM12 11V5a3.500 3.500 0 0 1 7 0v8a3 3 0 0 1-7 0z" />
              <path d="M1 9h18" />
            </ToolIcon>
          </ToolBar>
          <Viewer>
            <Sheet>
              <Frame>
                <ZoneStrip pull={topPull} />
                <FrameMiddle>
                  <MarginStrip w={15} />
                  <Drawing>
                    <Note>{"1. ALL RESISTANCE VALUES ARE IN OHMS, 0.1 WATT +/- 5%.\n2. ALL CAPACITANCE VALUES ARE IN MICROFARADS.\n3. ALL CRYSTALS & OSCILLATOR VALUES ARE IN HERTZ."}</Note>
                    <MainHeading>J420 P2 CHINA: MLB-A</MainHeading>
                    <ModLine $top={55} $size={8}>LAST_MODIFIED=Thu Jun  6 10:50:43 2019</ModLine>
                    <ModLine $top={73} $size={7.600}>LAST_MODIFICATION=Thu Jun  6 10:50:43 2019</ModLine>
                    <Watermark $x={176} $y={120}>XZZ@XZZHK</Watermark>
                    <Watermark $x={676} $y={120}>XZZ@XZZHK</Watermark>
                    <Watermark $x={176} $y={522}>XZZ@XZZHK</Watermark>
                    <Watermark $x={676} $y={522}>XZZ@XZZHK</Watermark>
                    <TocBlock x={94} raw={leftToc} />
                    <TocBlock x={463} raw={rightToc} />
                    <RevBlock>
                      <RevCell $head>REV</RevCell>
                      <RevCell $head>ECN</RevCell>
                      <RevCell $head $left>DESCRIPTION OF REVISION</RevCell>
                      <RevCell $head>
                        <RevDiagonal width="38" height="24" viewBox="0 0 38 24">
                          <path d="M0 24L38 0" stroke="#444" strokeWidth="0.800" />
                        </RevDiagonal>
                        <CkText>CK<br />APPD</CkText>
                        <DateText>DATE</DateText>
                      </RevCell>
                      <RevCell><RevMono>1</RevMono></RevCell>
                      <RevCell><RevMono>0018101741</RevMono></RevCell>
                      <RevCell $left><RevMono>ENGINEERING RELEASED</RevMono></RevCell>
                      <RevCell><RevMono>2019-06-06</RevMono></RevCell>
                    </RevBlock>
                    <BomHeading>SCH AND BOARD P/N</BomHeading>
                    <BomSide $x={514} $y={605}>PARTS</BomSide>
                    <BomSide $x={518} $y={612}>051-04785</BomSide>
                    <BomTable>
                      {bomCells.map((c, i) => (
                        <BomCell key={i}>{c}</BomCell>
                      ))}
                    </BomTable>
                    <TitleBlock>
                      <TitleBlockRow $h={6} $size={4.400} $pad={9}>TABLE OF CONTENTS</TitleBlockRow>
                      <TitleBlockRow $h={15} $size={4.800} $pad={58}>
                        <TinyLabel>DRAWING TITLE</TinyLabel>
                        SCHEM,MLB-A,TN,J420
                      </TitleBlockRow>
                      <TitleBlockBottom>
                        <TitleBlockCell />
                        <TitleBlockTick />
                      </TitleBlockBottom>
                    </TitleBlock>
                  </Drawing>
                  <MarginStrip w={14} />
                </FrameMiddle>
                <ZoneStrip />
              </Frame>
            </Sheet>
            <PageScroll>
              <ChevronUp size={12} strokeWidth={1.500} />
              <PageThumb />
              <PageScrollEnd>
                <ChevronDown size={12} strokeWidth={1.500} />
              </PageScrollEnd>
            </PageScroll>
          </Viewer>
        </RightPane>
      </Body>
      <StatusBar>XZZ Schematics https://www.xzz.hk</StatusBar>
    </Page>
  );
}
